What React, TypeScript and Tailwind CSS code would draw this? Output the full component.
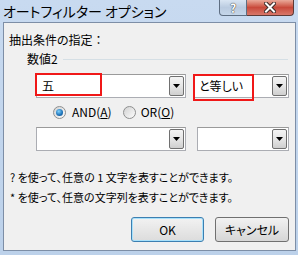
const font = {
  fontFamily: '"Noto Sans CJK JP", "Noto Sans", sans-serif',
};

const DropButton = () => (
  <div className="w-[15px] h-full border border-[#707070] rounded-[2px] bg-gradient-to-b from-[#f4f4f4] via-[#e6e6e6] to-[#cfcfcf] flex items-center justify-center">
    <svg width="7" height="4" viewBox="0 0 7 4">
      <path d="M0 0 H7 L3.5 4 Z" fill="#000" />
    </svg>
  </div>
);

interface ComboProps {
  value?: string;
  className: string;
  mark?: string;
}

const Combo = ({ value, className, mark }: ComboProps) => (
  <div
    className={`relative h-[24px] border border-[#abadb3] border-t-[#9a9a9a] bg-white flex p-[1px] ${className}`}
  >
    <div className="flex-1 pl-[4px] text-[12px] leading-[20px] text-black">
      {value}
    </div>
    <DropButton />
    {mark && (
      <div className={`absolute border-2 border-[#f01818] ${mark}`} />
    )}
  </div>
);

const Radio = ({ checked }: { checked: boolean }) => (
  <div className="w-[13px] h-[13px] rounded-full border border-[#8e8f8f] bg-gradient-to-br from-[#d2d2d2] to-[#fcfcfc] flex items-center justify-center">
    {checked && (
      <div className="w-[7px] h-[7px] rounded-full bg-[radial-gradient(circle_at_40%_35%,#7fd3ff,#1b6fb5_60%,#0f4f8a)]" />
    )}
  </div>
);

export default function App() {
  return (
    <div
      className="w-[298px] h-[255px] bg-gradient-to-b from-[#c8daf0] to-[#bcd1ea] flex flex-col text-black [font-feature-settings:'palt']"
      style={font}
    >
      {/* title bar */}
      <div className="h-[22px] flex items-start">
        <div className="pl-[3px] pt-[1px] text-[14px] leading-[20px] text-black">
          オートフィルター オプション
        </div>
        <div className="ml-auto mr-[4px] flex h-[16px]">
          <div className="w-[28px] h-full border border-[#5e6e82] border-t-0 rounded-bl-[4px] bg-gradient-to-b from-[#d9e5f3] via-[#bacbe0] to-[#c5d6ea] flex items-center justify-center">
            <span className="text-[12px] font-bold leading-none text-white [text-shadow:0_0_1px_#333,0_0_1px_#333]">
              ?
            </span>
          </div>
          <div className="w-[47px] h-full border border-[#5e3a36] border-l-0 border-t-0 rounded-br-[4px] bg-gradient-to-b from-[#e9a99a] via-[#c8493b] to-[#d8776a] flex items-center justify-center">
            <svg width="12" height="11" viewBox="0 0 12 11">
              <path
                d="M2 1.5 L10 9.5 M10 1.5 L2 9.5"
                stroke="#3a2a28"
                strokeWidth="4"
                strokeLinecap="square"
              />
              <path
                d="M2 1.5 L10 9.5 M10 1.5 L2 9.5"
                stroke="#fff"
                strokeWidth="2"
                strokeLinecap="square"
              />
            </svg>
          </div>
        </div>
      </div>

      {/* client area */}
      <div className="ml-[3px] mr-[2px] h-[229px] border border-[#7d8ea6] bg-[#f0f0f0] flex flex-col text-[12px]">
        <div className="mt-[8px] pl-[5px] leading-[18px]">
          抽出条件の指定<span className="[font-feature-settings:normal]">：</span>
        </div>
        <div className="mt-[1px] flex items-center h-[18px]">
          <span className="pl-[23px] leading-[18px]">数値2</span>
          <div className="ml-[5px] w-[225px] h-px bg-[#d5dfe5] mt-[1px]" />
        </div>

        <div className="mt-[6px] flex">
          <Combo
            value="五"
            className="ml-[32px] w-[150px]"
            mark="-left-[2px] -top-[2px] w-[67px] h-[23px]"
          />
          <Combo
            value="と等しい"
            className="ml-[7px] w-[96px]"
            mark="-left-[1px] -top-[1px] w-[61px] h-[27px]"
          />
        </div>

        <div className="mt-[5px] h-[18px] flex items-center">
          <div className="ml-[49px]">
            <Radio checked />
          </div>
          <span className="ml-[6px] leading-[18px]">
            AND(<span className="underline">A</span>)
          </span>
          <div className="ml-[11px]">
            <Radio checked={false} />
          </div>
          <span className="ml-[5px] leading-[18px]">
            OR(<span className="underline">O</span>)
          </span>
        </div>

        <div className="mt-[6px] flex">
          <Combo className="ml-[32px] w-[150px]" />
          <Combo className="ml-[11px] w-[92px]" />
        </div>

        <div className="mt-[16px] pl-[6px] leading-[20px] text-[11px]">
          ? を使って、任意の 1 文字を表すことができます。
        </div>
        <div className="pl-[6px] leading-[20px] text-[11px]">
          * を使って、任意の文字列を表すことができます。
        </div>

        <div className="mt-[10px] flex">
          <button className="ml-[127px] w-[73px] h-[25px] rounded-[3px] border border-[#3c7fb1] shadow-[inset_0_0_0_1px_#a8e1fb] bg-gradient-to-b from-[#f2f2f2] to-[#dcdcdc] text-[12px] leading-none">
            OK
          </button>
          <button className="ml-[11px] w-[74px] h-[25px] rounded-[3px] border border-[#707070] bg-gradient-to-b from-[#f2f2f2] to-[#d6d6d6] text-[12px] leading-none">
            キャンセル
          </button>
        </div>
      </div>
    </div>
  );
}
